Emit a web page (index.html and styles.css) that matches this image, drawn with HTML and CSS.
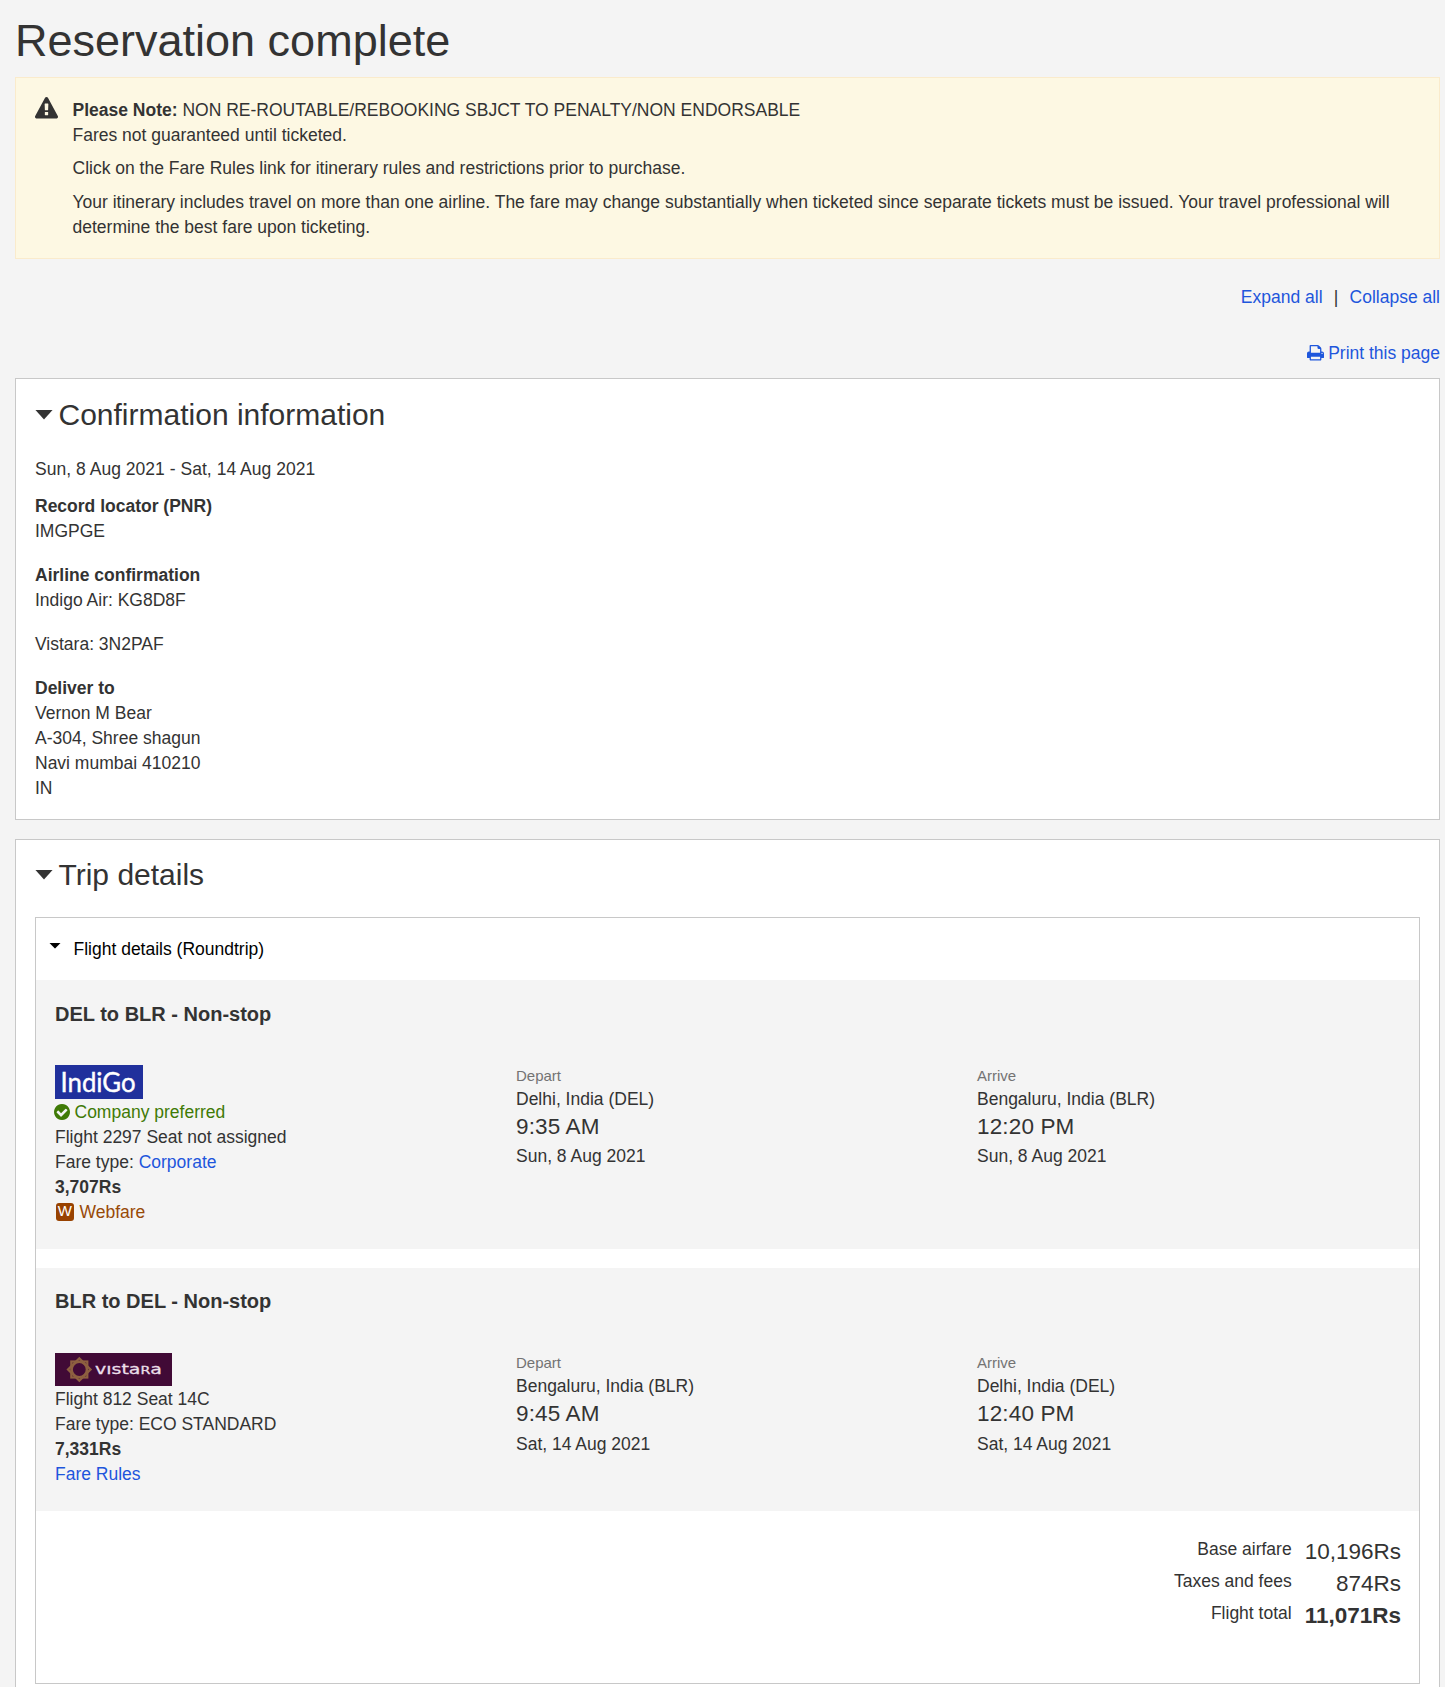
FILE: index.html
```html
<!DOCTYPE html>
<html lang="en">
<head>
<meta charset="utf-8">
<title>Reservation complete</title>
<link rel="stylesheet" href="styles.css">
</head>
<body>
<main class="page">
  <h1 class="page-title">Reservation complete</h1>

  <section class="alert">
    <svg class="alert-icon" viewBox="0 0 1792 1664" preserveAspectRatio="none" aria-hidden="true"><path fill="currentColor" d="M1024 1375v-190q0-14-9.500-23.500t-22.500-9.500h-192q-13 0-22.500 9.500t-9.500 23.500v190q0 14 9.500 23.500t22.500 9.500h192q13 0 22.500-9.500t9.500-23.500zm-2-374l18-459q0-12-10-19-13-11-24-11h-220q-11 0-24 11-10 7-10 21l17 457q0 10 10 16.500t24 6.500h185q14 0 23.500-6.500t10.500-16.500zm-14-934l768 1408q35 63-2 126-17 29-46.500 46t-63.500 17h-1536q-34 0-63.500-17t-46.500-46q-37-63-2-126l768-1408q17-31 47-49t65-18 65 18 47 49z"/></svg>
    <div class="alert-body">
      <p><strong>Please Note:</strong> NON RE-ROUTABLE/REBOOKING SBJCT TO PENALTY/NON ENDORSABLE<br>Fares not guaranteed until ticketed.</p>
      <p>Click on the Fare Rules link for itinerary rules and restrictions prior to purchase.</p>
      <p>Your itinerary includes travel on more than one airline. The fare may change substantially when ticketed since separate tickets must be issued. Your travel professional will determine the best fare upon ticketing.</p>
    </div>
  </section>

  <div class="toggle-links">
    <a href="#">Expand all</a><span class="divider">|</span><a href="#">Collapse all</a>
  </div>
  <div class="print-row">
    <a href="#" class="print-link"><svg class="print-icon" viewBox="64 128 1664 1536" preserveAspectRatio="none" aria-hidden="true"><path fill="currentColor" d="M448 1536h896v-256h-896v256zm0-640h896v-384h-160q-40 0-68-28t-28-68v-160h-640v640zm1152 64q0-26-19-45t-45-19-45 19-19 45 19 45 45 19 45-19 19-45zm128 0v416q0 13-9.500 22.500t-22.500 9.500h-224v160q0 40-28 68t-68 28h-960q-40 0-68-28t-28-68v-160h-224q-13 0-22.500-9.500t-9.500-22.500v-416q0-79 56.500-135.500t135.500-56.500h64v-544q0-40 28-68t68-28h672q40 0 88 20t76 48l152 152q28 28 48 76t20 88v256h64q79 0 135.500 56.500t56.500 135.500z"/></svg>Print this page</a>
  </div>

  <section class="panel confirmation">
    <h2 class="panel-title"><span class="caret"></span>Confirmation information</h2>
    <p class="dates">Sun, 8 Aug 2021 - Sat, 14 Aug 2021</p>
    <div class="block"><strong>Record locator (PNR)</strong><br>IMGPGE</div>
    <div class="block"><strong>Airline confirmation</strong><br>Indigo Air: KG8D8F</div>
    <div class="block">Vistara: 3N2PAF</div>
    <div class="block deliver"><strong>Deliver to</strong><br>Vernon M Bear<br>A-304, Shree shagun<br>Navi mumbai 410210<br>IN</div>
  </section>

  <section class="panel trip">
    <h2 class="panel-title"><span class="caret"></span>Trip details</h2>
    <div class="flights">
      <div class="flights-head"><span class="caret caret-small"></span>Flight details (Roundtrip)</div>

      <article class="leg outbound">
        <h3>DEL to BLR - Non-stop</h3>
        <div class="leg-grid">
          <div class="carrier">
            <svg class="logo" width="88" height="34" viewBox="0 0 88 34" role="img" aria-label="IndiGo">
              <rect width="88" height="34" fill="#20309c"/>
              <text class="indigo-name" x="5.500" y="27" textLength="75" lengthAdjust="spacingAndGlyphs">IndiGo</text>
            </svg>
            <div class="preferred"><svg class="check-icon" viewBox="128 128 1536 1536" aria-hidden="true"><path fill="currentColor" d="M1412 734q0-28-18-46l-91-90q-19-19-45-19t-45 19l-408 407-226-226q-19-19-45-19t-45 19l-91 90q-18 18-18 46 0 27 18 45l362 362q19 19 45 19 27 0 46-19l543-543q18-18 18-45zm252 162q0 209-103 385.500t-279.500 279.500-385.500 103-385.500-103-279.500-279.500-103-385.500 103-385.500 279.500-279.500 385.500-103 385.500 103 279.500 279.500 103 385.500z"/></svg>Company preferred</div>
            <div>Flight 2297 Seat not assigned</div>
            <div>Fare type: <a href="#">Corporate</a></div>
            <div><strong>3,707Rs</strong></div>
            <div class="webfare"><span class="badge">W</span>Webfare</div>
          </div>
          <div class="stop">
            <div class="stop-label">Depart</div>
            <div class="place">Delhi, India (DEL)</div>
            <div class="time">9:35 AM</div>
            <div>Sun, 8 Aug 2021</div>
          </div>
          <div class="stop">
            <div class="stop-label">Arrive</div>
            <div class="place">Bengaluru, India (BLR)</div>
            <div class="time">12:20 PM</div>
            <div>Sun, 8 Aug 2021</div>
          </div>
        </div>
      </article>

      <article class="leg inbound">
        <h3>BLR to DEL - Non-stop</h3>
        <div class="leg-grid">
          <div class="carrier">
            <svg class="logo" width="117" height="33" viewBox="0 0 117 33" role="img" aria-label="Vistara">
              <rect width="117" height="33" fill="#410a36"/>
              <g transform="translate(24.300 16.500)" fill="none" stroke="#8d6040">
                <rect x="-8" y="-8" width="16" height="16" stroke-width="2.200"/>
                <rect x="-8" y="-8" width="16" height="16" stroke-width="2.200" transform="rotate(45)"/>
                <circle r="7.400" stroke-width="2"/>
              </g>
              <text class="vistara-name" x="40" y="21.300" textLength="67" lengthAdjust="spacingAndGlyphs">vısta<tspan class="small-r">R</tspan>a</text>
            </svg>
            <div>Flight 812 Seat 14C</div>
            <div>Fare type: ECO STANDARD</div>
            <div><strong>7,331Rs</strong></div>
            <div><a href="#">Fare Rules</a></div>
          </div>
          <div class="stop">
            <div class="stop-label">Depart</div>
            <div class="place">Bengaluru, India (BLR)</div>
            <div class="time">9:45 AM</div>
            <div>Sat, 14 Aug 2021</div>
          </div>
          <div class="stop">
            <div class="stop-label">Arrive</div>
            <div class="place">Delhi, India (DEL)</div>
            <div class="time">12:40 PM</div>
            <div>Sat, 14 Aug 2021</div>
          </div>
        </div>
      </article>

      <dl class="totals">
        <dt>Base airfare</dt><dd>10,196Rs</dd>
        <dt>Taxes and fees</dt><dd>874Rs</dd>
        <dt>Flight total</dt><dd><strong>11,071Rs</strong></dd>
      </dl>
    </div>
  </section>
</main>
</body>
</html>
```
FILE: styles.css
```css
* {
  box-sizing: border-box;
}

body {
  margin: 0;
  height: 1687px;
  overflow: hidden;
  background: #f4f4f4;
  color: #333;
  font: 17.5px/25px "Liberation Sans", Arial, sans-serif;
}

h1, h2, h3, p, dl, dd {
  margin: 0;
}

a {
  color: #1e56dc;
  text-decoration: none;
}

.page {
  padding: 16px 5px 0 15px;
}

.page-title {
  height: 61px;
  font-size: 45px;
  font-weight: 400;
  line-height: 50px;
}

.alert {
  display: flex;
  gap: 14.5px;
  height: 182px;
  padding: 19px 19px 0;
  border: 1px solid #faebcc;
  background: #fdf8e3;
}

.alert-icon {
  flex: none;
  width: 23px;
  height: 21.5px;
}

.alert-body {
  padding-top: 1px;
}

.alert-body p {
  margin-bottom: 8.75px;
}

.alert-body p:first-child {
  margin-bottom: 7.75px;
}

.toggle-links {
  display: flex;
  justify-content: flex-end;
  margin-top: 26px;
}

.divider {
  width: 27px;
  text-align: center;
}

.print-row {
  display: flex;
  justify-content: flex-end;
  margin-top: 31px;
}

.print-link {
  display: flex;
}

.print-icon {
  width: 17px;
  height: 15.5px;
  margin: 4px 4px 0 0;
}

.panel {
  padding: 19px;
  border: 1px solid #c8c8c8;
  background: #fff;
}

.confirmation {
  height: 442px;
  margin-top: 12px;
}

.panel-title {
  display: flex;
  align-items: center;
  font-size: 30px;
  font-weight: 400;
  line-height: 33px;
}

.caret {
  width: 18px;
  height: 10px;
  margin: 0 5.5px 0 0;
  background: currentColor;
  clip-path: polygon(0 0, 100% 0, 55% 90%, 50% 100%, 45% 90%);
}

.dates {
  margin: 26px 0 12px;
  letter-spacing: 0.03px;
}

.block {
  margin-bottom: 18.75px;
}

.deliver {
  margin-top: 19.5px;
}

.trip {
  height: 900px;
  margin-top: 19px;
  padding-top: 18px;
}

.flights {
  height: 767px;
  margin-top: 26px;
  border: 1px solid #c8c8c8;
}

.flights-head {
  display: flex;
  height: 62px;
  padding: 18.500px 0 0 13px;
  color: #000;
}

.caret-small {
  width: 12px;
  height: 6px;
  margin: 6px 12.5px 0 0;
}

.leg {
  padding: 23px 19px 0;
  background: #f4f4f4;
}

.outbound {
  height: 269px;
}

.inbound {
  height: 243px;
  margin-top: 19px;
  padding-top: 22px;
}

.leg h3 {
  font-size: 20px;
  line-height: 22px;
}

.leg-grid {
  display: grid;
  grid-template-columns: 461px 461px 1fr;
  margin-top: 40px;
}

.inbound .carrier {
  padding-top: 1px;
}

.logo {
  display: block;
  margin-bottom: 1px;
}

.indigo-name {
  fill: #fff;
  stroke: #fff;
  stroke-width: 0.4px;
  font: 400 26px Lato, sans-serif;
}

.vistara-name {
  fill: #eadfe8;
  stroke: #eadfe8;
  stroke-width: 0.3px;
  font: 14px "DejaVu Sans", sans-serif;
}

.small-r {
  font-size: 10.500px;
}

.preferred {
  display: flex;
  color: #3f7a06;
}

.check-icon {
  width: 16px;
  height: 16px;
  margin: 3.500px 4.5px 0 -1px;
}

.webfare {
  display: flex;
  color: #984a08;
}

.badge {
  width: 17.5px;
  height: 17.5px;
  margin: 3px 6px 0 1px;
  border-radius: 3px;
  background: #984200;
  color: #fff;
  font-size: 15px;
  line-height: 16px;
  text-align: center;
}

.stop-label {
  margin-bottom: 1px;
  color: #737373;
  font-size: 15px;
  line-height: 21px;
}

.time {
  margin: -1px 0 1px;
  font-size: 22.500px;
  letter-spacing: 0.15px;
  line-height: 32px;
}

.inbound .time {
  margin-bottom: 2px;
}

.totals {
  display: grid;
  grid-template-columns: 1fr auto;
  grid-auto-rows: 32px;
  column-gap: 13px;
  padding: 25px 18px 0;
  text-align: right;
}

.totals dt {
  padding-top: 1px;
}

.totals dd {
  font-size: 22.500px;
  line-height: 32px;
}
```
